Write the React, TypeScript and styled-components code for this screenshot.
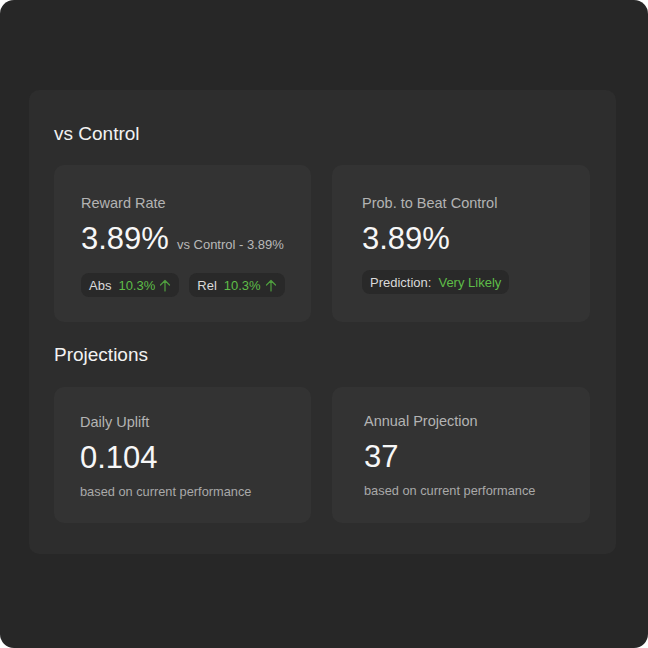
import React from "react";
import styled, { createGlobalStyle } from "styled-components";

const Global = createGlobalStyle`
  html, body { margin: 0; padding: 0; background: #ffffff; }
  body { font-family: "Liberation Sans", Arial, Helvetica, sans-serif; }
  * { box-sizing: border-box; }
`;

const Frame = styled.div`
  width: 648px;
  height: 648px;
  background: #272727;
  border-radius: 14px;
  padding: 90px 32px 0 29px;
`;

const Panel = styled.section`
  width: 587px;
  background: #2d2d2d;
  border-radius: 10px;
  padding: 32px 26px 31px 25px;
  display: flex;
  flex-direction: column;
`;

const SectionTitle = styled.h2<{ $gap: number; $mt?: number }>`
  margin: ${(p) => p.$mt ?? 0}px 0 ${(p) => p.$gap}px 0;
  font-size: 19px;
  line-height: 24px;
  font-weight: 400;
  color: #f2f2f2;
`;

const Grid = styled.div<{ $mb?: number }>`
  display: grid;
  grid-template-columns: 257px 258px;
  column-gap: 21px;
  margin-bottom: ${(p) => p.$mb ?? 0}px;
`;

const Card = styled.div<{ $h: number; $pl: number; $pt: number }>`
  height: ${(p) => p.$h}px;
  background: #333333;
  border-radius: 10px;
  padding: ${(p) => p.$pt}px 16px 0 ${(p) => p.$pl}px;
  display: flex;
  flex-direction: column;
`;

const Label = styled.div`
  font-size: 14.5px;
  line-height: 18px;
  color: #b3b3b3;
`;

const ValueRow = styled.div`
  display: flex;
  align-items: baseline;
  gap: 8px;
  margin-top: 9px;
`;

const Value = styled.div`
  font-size: 31px;
  line-height: 36px;
  color: #f7f7f7;
`;

const Compare = styled.span`
  font-size: 13px;
  color: #b9b9b9;
`;

const PillRow = styled.div<{ $mt: number }>`
  display: flex;
  gap: 10px;
  margin-top: ${(p) => p.$mt}px;
`;

const Pill = styled.div<{ $pr: number }>`
  height: 24px;
  display: inline-flex;
  align-items: center;
  padding: 0 ${(p) => p.$pr}px 0 8px;
  background: #292929;
  border-radius: 8px;
  font-size: 13px;
  color: #dadada;
`;

const PillKey = styled.span`
  margin-right: 7px;
`;

const Green = styled.span`
  color: #5ebd48;
`;

const Sub = styled.div`
  margin-top: 8px;
  font-size: 12.8px;
  line-height: 16px;
  color: #a9a9a9;
`;

const ArrowUp = () => (
  <svg width="12" height="13" viewBox="0 0 12 13" style={{ marginLeft: 4 }}>
    <path
      d="M6 12V1.5M1.5 6L6 1.5L10.5 6"
      fill="none"
      stroke="#4f9e3e"
      strokeWidth="1.2"
      strokeLinecap="round"
      strokeLinejoin="round"
    />
  </svg>
);

export default function App() {
  return (
    <>
      <Global />
      <Frame>
        <Panel>
          <SectionTitle $gap={19}>vs Control</SectionTitle>
          <Grid $mb={21}>
            <Card $h={157} $pl={27} $pt={29}>
              <Label>Reward Rate</Label>
              <ValueRow>
                <Value>3.89%</Value>
                <Compare>vs Control - 3.89%</Compare>
              </ValueRow>
              <PillRow $mt={16}>
                <Pill $pr={8}>
                  <PillKey>Abs</PillKey>
                  <Green>10.3%</Green>
                  <ArrowUp />
                </Pill>
                <Pill $pr={8}>
                  <PillKey>Rel</PillKey>
                  <Green>10.3%</Green>
                  <ArrowUp />
                </Pill>
              </PillRow>
            </Card>
            <Card $h={157} $pl={30} $pt={29}>
              <Label>Prob. to Beat Control</Label>
              <ValueRow>
                <Value>3.89%</Value>
              </ValueRow>
              <PillRow $mt={13}>
                <Pill $pr={8}>
                  <PillKey>Prediction:</PillKey>
                  <Green>Very Likely</Green>
                </Pill>
              </PillRow>
            </Card>
          </Grid>
          <SectionTitle $gap={20}>Projections</SectionTitle>
          <Grid>
            <Card $h={136} $pl={26} $pt={26}>
              <Label>Daily Uplift</Label>
              <ValueRow>
                <Value>0.104</Value>
              </ValueRow>
              <Sub>based on current performance</Sub>
            </Card>
            <Card $h={136} $pl={32} $pt={25}>
              <Label>Annual Projection</Label>
              <ValueRow>
                <Value>37</Value>
              </ValueRow>
              <Sub>based on current performance</Sub>
            </Card>
          </Grid>
        </Panel>
      </Frame>
    </>
  );
}
